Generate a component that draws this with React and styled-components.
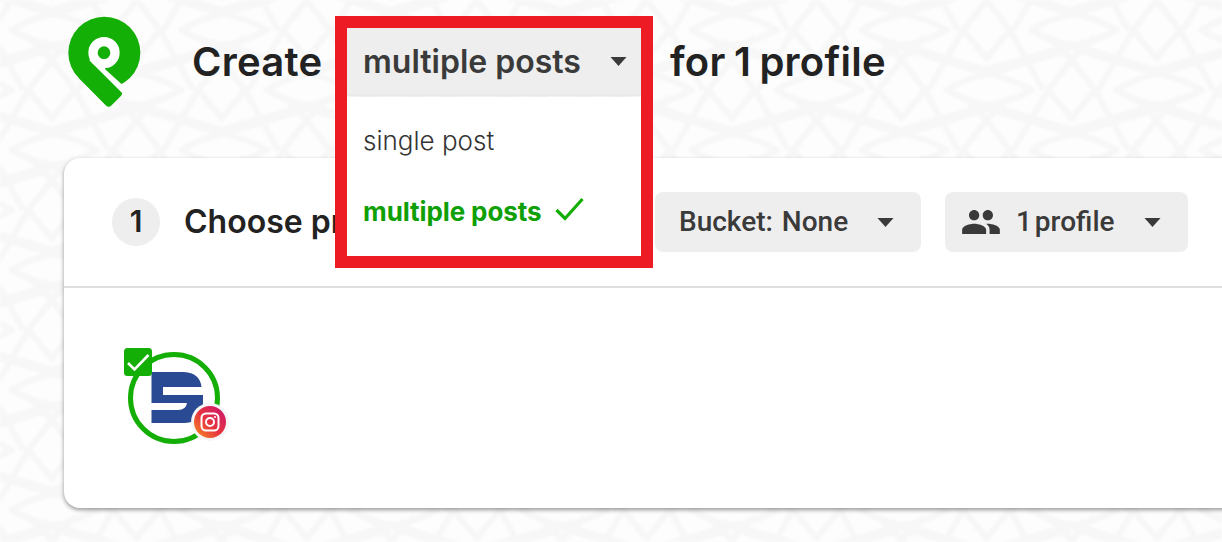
import React from "react"
import styled, { createGlobalStyle } from "styled-components"

const GlobalStyle = createGlobalStyle`
    html, body {
        margin: 0;
        padding: 0;
        background: #fdfdfd;
    }
    * {
        box-sizing: border-box;
    }
`

// one cell of the background lattice, in 3x units
const Lattice = () => (
    <g fill="none" stroke="#f7f7f7" strokeWidth="19" strokeLinejoin="round">
        <path d="M260 0 L330 90 L260 175 L190 90 Z" />
        <path d="M395 90 Q450 55 520 42 Q590 55 650 90 Q590 125 520 135 Q450 125 395 90 Z" />
        <path d="M190 90 L85 270 M330 90 L430 270" />
        <path d="M520 135 L250 212 M520 135 L775 212 M520 42 L260 -35 M520 42 L780 -35" />
        <path d="M260 0 L190 -70 M260 0 L330 -70" />
    </g>
)

const latticeCopies = []
for (const x of [-510, 0, 510]) {
    for (const y of [-360, 0, 360]) {
        latticeCopies.push([x, y], [x + 255, y + 180])
    }
}

function Backdrop() {
    return (
        <BackdropSvg aria-hidden="true">
            <defs>
                <pattern id="lattice" width="510" height="360" patternUnits="userSpaceOnUse" patternTransform="translate(50 0) scale(0.3333)">
                    {latticeCopies.map(([x, y]) => (
                        <g key={x + "_" + y} transform={`translate(${x} ${y})`}>
                            <Lattice />
                        </g>
                    ))}
                </pattern>
                <filter id="soft"><feGaussianBlur stdDeviation="1" /></filter>
            </defs>
            <rect width="100%" height="100%" fill="url(#lattice)" filter="url(#soft)" />
        </BackdropSvg>
    )
}

function PinLogo() {
    return (
        <LogoSvg viewBox="50 45 225 285">
            <circle cx="162" cy="158" r="108" fill="#13ae06" />
            <path d="M85 234 L166 316 Q175 325 184 316 L211 289 Q219 281 211 273 L130 190 Z" fill="#13ae06" />
            <circle cx="161" cy="158" r="33" fill="none" stroke="#fff" strokeWidth="28" />
            <path d="M116 180 L213 277 L224 262 L163 206 L190 186 Z" fill="#fff" />
        </LogoSvg>
    )
}

function Caret() {
    return (
        <CaretSvg viewBox="0 0 16 9">
            <path d="M0 0 H16 L8 9 Z" fill="#3a3a3a" />
        </CaretSvg>
    )
}

function PeopleIcon() {
    return (
        <PeopleSvg viewBox="1 5 22 14">
            <path fill="#3a3a3a" d="M16 11c1.66 0 2.99-1.34 2.99-3S17.66 5 16 5c-1.66 0-3 1.34-3 3s1.34 3 3 3zm-8 0c1.66 0 2.99-1.34 2.99-3S9.66 5 8 5C6.34 5 5 6.34 5 8s1.34 3 3 3zm0 2c-2.33 0-7 1.17-7 3.5V19h14v-2.5c0-2.33-4.67-3.5-7-3.5zm8 0c-.29 0-.62.02-.97.05 1.16.84 1.97 1.97 1.97 3.45V19h6v-2.5c0-2.33-4.67-3.5-7-3.5z" />
        </PeopleSvg>
    )
}

function ProfileAvatar() {
    return (
        <AvatarSvg viewBox="120 345 110 100">
            <defs>
                <linearGradient id="insta" x1="0" y1="1" x2="1" y2="0">
                    <stop offset="0" stopColor="#f7941e" />
                    <stop offset="0.45" stopColor="#e8353f" />
                    <stop offset="1" stopColor="#c8146f" />
                </linearGradient>
            </defs>
            <circle cx="174" cy="398" r="43.5" fill="#fff" stroke="#13ae06" strokeWidth="5" />
            <path fill="#2b4a94" d="M151.5 372 H184 Q200 373 201.5 387 H163 V395 H203 V405 Q202 422 185 423 H151.5 V410 H178 Q186 410 187 403 H151.5 Z" />
            <circle cx="210" cy="422" r="19" fill="#f6f6f6" />
            <circle cx="210" cy="422" r="16" fill="url(#insta)" />
            <rect x="201.5" y="413.5" width="17" height="17" rx="4.5" fill="none" stroke="#fff" strokeWidth="2" />
            <circle cx="210" cy="422" r="4" fill="none" stroke="#fff" strokeWidth="2" />
            <circle cx="215" cy="417" r="1.1" fill="#fff" />
            <rect x="124" y="348" width="28" height="28" rx="3.5" fill="#13ae06" />
            <path d="M128 363 L134.5 369.5 L148.5 355" fill="none" stroke="#fff" strokeWidth="2.6" />
        </AvatarSvg>
    )
}

function App() {
    return (
        <Page>
            <GlobalStyle />
            <Backdrop />
            <Header>
                <PinLogo />
                <Title>Create</Title>
                <PostSelect>
                    <SelectButton>
                        multiple posts
                        <Caret />
                    </SelectButton>
                    <Menu>
                        <MenuItem>single post</MenuItem>
                        <MenuItem $active>
                            multiple posts
                            <CheckSvg viewBox="0 0 29 24">
                                <path d="M1.5 13 L10 21.5 L27.5 2" fill="none" stroke="#13ae06" strokeWidth="3.2" />
                            </CheckSvg>
                        </MenuItem>
                    </Menu>
                    <Highlight />
                </PostSelect>
                <Title $after>for 1 profile</Title>
            </Header>
            <Card>
                <CardHead>
                    <StepBadge>1</StepBadge>
                    <StepLabel>Choose profiles</StepLabel>
                    <FilterButton $width={266}>
                        Bucket: None
                        <Caret />
                    </FilterButton>
                    <FilterButton $width={243} $tight>
                        <PeopleIcon />
                        1 profile
                        <Caret />
                    </FilterButton>
                </CardHead>
                <CardBody>
                    <ProfileAvatar />
                </CardBody>
            </Card>
        </Page>
    )
}

const Page = styled.div`
    position: relative;
    width: 1222px;
    height: 542px;
    padding-top: 16px;
    overflow: hidden;
    font-family: Inter, "Liberation Sans", sans-serif;
    color: #222;
`

const BackdropSvg = styled.svg`
    position: absolute;
    inset: 0;
    width: 100%;
    height: 100%;
`

const Header = styled.header`
    position: relative;
    z-index: 2;
    display: flex;
    align-items: center;
    height: 92px;
    padding-left: 67px;
    margin-bottom: 50px;
`

const LogoSvg = styled.svg`
    width: 75px;
    height: 95px;
    margin-right: 50px;
`

const Title = styled.h1`
    margin: 0 0 2px ${(props) => (props.$after ? "29px" : "0")};
    width: ${(props) => (props.$after ? "auto" : "155px")};
    font-size: 40px;
    font-weight: 600;
    letter-spacing: 0.25px;
    word-spacing: -2px;
    white-space: nowrap;
`

const PostSelect = styled.div`
    position: relative;
    width: 294px;
    height: 68px;
`

const SelectButton = styled.div`
    display: flex;
    align-items: center;
    justify-content: space-between;
    height: 68px;
    padding: 0 14px 2px 16px;
    background: #eeeeee;
    color: #3a3a3a;
    font-size: 32px;
    font-weight: 600;
`

const Menu = styled.div`
    position: absolute;
    top: 69px;
    left: 0;
    right: 0;
    height: 160px;
    padding-top: 8px;
    background: #fff;
    box-shadow: 0 2px 6px rgba(0, 0, 0, 0.2);
`

const MenuItem = styled.div`
    display: flex;
    align-items: center;
    gap: 14px;
    height: 71px;
    padding-left: 16px;
    font-size: 26px;
    font-weight: ${(props) => (props.$active ? 700 : 300)};
    letter-spacing: ${(props) => (props.$active ? "-0.1px" : "0")};
    color: ${(props) => (props.$active ? "#0f9f06" : "#333")};
`

const CheckSvg = styled.svg`
    width: 29px;
    height: 24px;
    margin-bottom: 6px;
`

const Highlight = styled.div`
    position: absolute;
    top: -12px;
    left: -12px;
    width: 318px;
    height: 252px;
    border: 12px solid #ed1c24;
    pointer-events: none;
`

const CaretSvg = styled.svg`
    width: 17px;
    height: 9px;
    flex: none;
`

const Card = styled.section`
    position: relative;
    width: 1300px;
    height: 350px;
    margin-left: 64px;
    background: #fff;
    border-radius: 16px;
    box-shadow: 0 2px 4px rgba(0, 0, 0, 0.4);
`

const CardHead = styled.div`
    display: flex;
    align-items: center;
    gap: 24px;
    height: 130px;
    padding-left: 48px;
    border-bottom: 2px solid #dedede;
`

const StepBadge = styled.span`
    display: flex;
    align-items: center;
    justify-content: center;
    flex: none;
    width: 48px;
    height: 48px;
    padding-bottom: 2px;
    border-radius: 50%;
    background: #eeeeee;
    font-size: 30px;
    font-weight: 600;
`

const StepLabel = styled.h2`
    flex: none;
    width: 447px;
    margin: 0 0 2px;
    font-size: 32px;
    font-weight: 600;
`

const FilterButton = styled.div`
    display: flex;
    align-items: center;
    gap: 16px;
    flex: none;
    width: ${(props) => props.$width}px;
    height: 60px;
    padding: 0 27px 2px ${(props) => (props.$tight ? "17px" : "24px")};
    background: #eeeeee;
    border-radius: 8px;
    color: #3a3a3a;
    font-family: Roboto, "Liberation Sans", sans-serif;
    font-size: 28px;
    font-weight: 500;
    word-spacing: ${(props) => (props.$tight ? "-4px" : "2px")};
    svg:last-child {
        margin: 2px 0 0 auto;
    }
`

const PeopleSvg = styled.svg`
    width: 38px;
    height: 24px;
    margin-top: 2px;
`

const CardBody = styled.div`
    padding: 57px 0 0 56px;
`

const AvatarSvg = styled.svg`
    display: block;
    width: 110px;
    height: 100px;
`

export default App
